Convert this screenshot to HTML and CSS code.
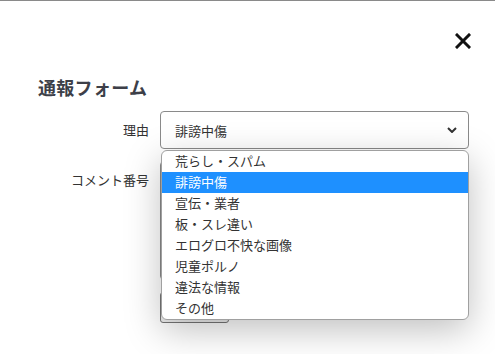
FILE: index.html
```html
<!DOCTYPE html>
<html lang="ja">
<head>
  <meta charset="UTF-8">
  <meta name="viewport" content="width=device-width, initial-scale=1.0">
  <title>通報フォーム</title>
  <link rel="stylesheet" href="styles.css">
</head>
<body>
  <div class="modal">
    <div class="modal-head">
      <button class="close" aria-label="閉じる">
        <svg width="16" height="16" viewBox="0 0 16 16">
          <path d="M2 2 L14 14 M14 2 L2 14" stroke="#111" stroke-width="3" stroke-linecap="square" fill="none"/>
        </svg>
      </button>
    </div>
    <h2 class="title">通報フォーム</h2>
    <form class="report-form">
      <label class="label">理由</label>
      <div class="select-wrap">
        <div class="select">
          <span>誹謗中傷</span>
          <svg class="chevron" width="10" height="6" viewBox="0 0 10 6">
            <path d="M1 1 L5 5 L9 1" stroke="#333" stroke-width="2" fill="none"/>
          </svg>
        </div>
        <ul class="options">
          <li>荒らし・スパム</li>
          <li class="selected">誹謗中傷</li>
          <li>宣伝・業者</li>
          <li>板・スレ違い</li>
          <li>エログロ不快な画像</li>
          <li>児童ポルノ</li>
          <li>違法な情報</li>
          <li>その他</li>
        </ul>
      </div>
      <label class="label">コメント番号</label>
      <textarea class="comment"></textarea>
      <span></span>
      <button type="button" class="submit" aria-label="送信する"></button>
    </form>
  </div>
</body>
</html>
```

FILE: styles.css
```css
* {
  margin: 0;
  padding: 0;
  box-sizing: border-box;
}
body {
  background: #fff;
  border-top: 1px solid #8a8a8a;
  font-family: "Noto Sans CJK JP", "Noto Sans", sans-serif;
  color: #333;
  overflow: hidden;
  height: 354px;
}
.modal {
  padding: 32px 24px 0 38px;
}
.modal-head {
  display: flex;
  justify-content: flex-end;
}
.close {
  width: 16px;
  height: 16px;
  border: none;
  background: none;
  display: block;
  cursor: pointer;
}
.close svg {
  display: block;
}
.title {
  margin-top: 26px;
  font-size: 18px;
  line-height: 24px;
  font-weight: bold;
  color: #3d3f48;
  letter-spacing: 0.3px;
}
.report-form {
  margin-top: 12px;
  display: grid;
  grid-template-columns: 111px 309px;
  column-gap: 11px;
  row-gap: 12px;
  align-items: start;
}
.label {
  font-size: 13px;
  line-height: 20px;
  padding-top: 9px;
  text-align: right;
  color: #333;
}
.select-wrap {
  position: relative;
}
.select {
  height: 38px;
  border: 1px solid #8a8a8a;
  border-radius: 4px;
  padding: 0 8px 0 14px;
  display: flex;
  align-items: center;
  justify-content: space-between;
  font-size: 13px;
  color: #333;
}
.chevron {
  margin-right: 3px;
}
.options {
  list-style: none;
  position: absolute;
  top: calc(100% + 1px);
  left: 1px;
  right: 0;
  background: #fff;
  border: 1px solid #a0a0a0;
  border-radius: 6px;
  overflow: hidden;
  box-shadow: 0 10px 36px rgba(0, 0, 0, 0.25);
  z-index: 10;
}
.options li {
  height: 21px;
  line-height: 19px;
  padding-left: 13px;
  font-size: 13px;
  color: #333;
}
.options li.selected {
  background: #1e90ff;
  color: #fff;
}
.comment {
  height: 119px;
  border: 1px solid #8a8a8a;
  border-radius: 4px;
  resize: none;
}
.submit {
  width: 69px;
  height: 31px;
  border: 1px solid #777;
  border-radius: 3px;
  background: #efefef;
}
```
